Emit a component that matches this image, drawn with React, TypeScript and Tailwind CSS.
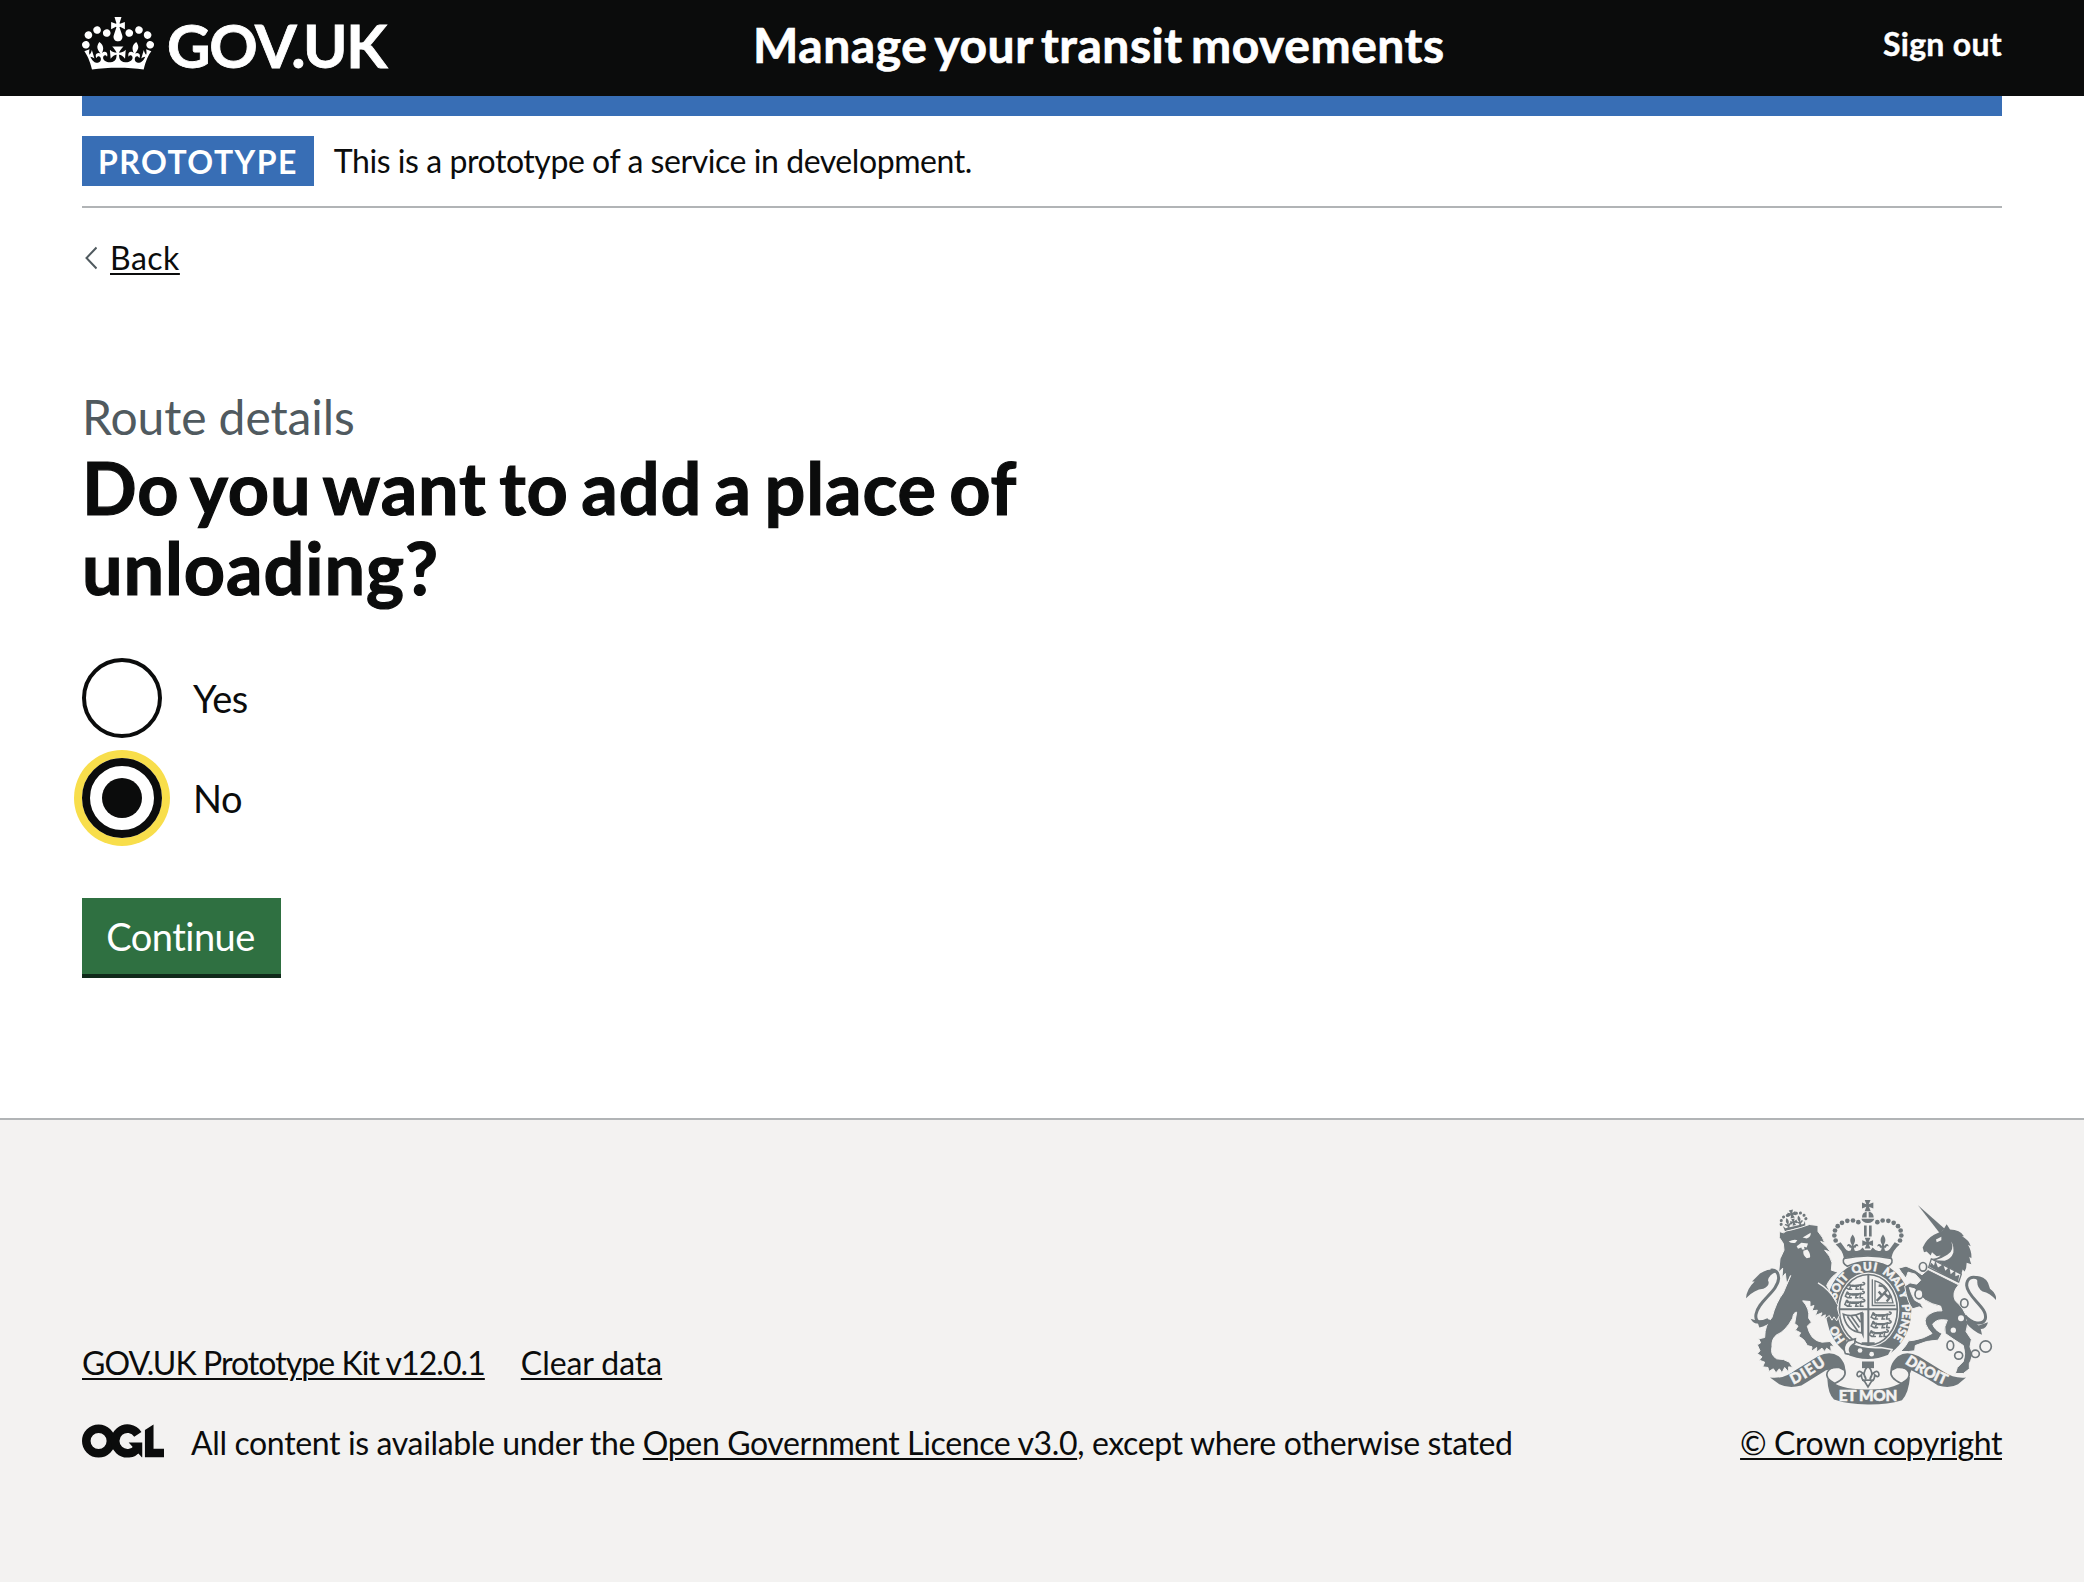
import React from "react";

function Crown({ className }: { className?: string }) {
  return (
    <svg className={className} viewBox="0 0 132 97" fill="currentColor" aria-hidden="true">
      <path
        fillRule="evenodd"
        d="M25 30.2c3.5 1.5 7.7-.2 9.1-3.7 1.5-3.6-.2-7.8-3.9-9.2-3.6-1.4-7.6.3-9.1 3.9-1.4 3.5.3 7.5 3.9 9zM9 39.5c3.6 1.5 7.8-.2 9.2-3.7 1.5-3.6-.2-7.8-3.9-9.1-3.6-1.5-7.6.2-9.1 3.8-1.4 3.5.3 7.5 3.8 9zM4.4 57.2c3.5 1.5 7.7-.2 9.1-3.8 1.5-3.6-.2-7.7-3.9-9.1-3.5-1.5-7.6.3-9.1 3.8-1.4 3.5.3 7.6 3.9 9.1zm38.3-21.4c3.5 1.5 7.7-.2 9.1-3.8 1.5-3.6-.2-7.7-3.9-9.1-3.6-1.5-7.6.3-9.1 3.8-1.3 3.6.4 7.7 3.9 9.1zm64.4-5.6c-3.6 1.5-7.8-.2-9.1-3.7-1.5-3.6.2-7.8 3.8-9.2 3.6-1.4 7.7.3 9.2 3.9 1.3 3.5-.4 7.5-3.9 9zm15.9 9.3c-3.6 1.5-7.7-.2-9.1-3.7-1.5-3.6.2-7.8 3.7-9.1 3.6-1.5 7.7.2 9.2 3.8 1.5 3.5-.3 7.5-3.8 9zm4.7 17.7c-3.6 1.5-7.8-.2-9.2-3.8-1.5-3.6.2-7.7 3.9-9.1 3.6-1.5 7.7.3 9.2 3.8 1.3 3.5-.4 7.6-3.9 9.1zM89.3 35.8c-3.6 1.5-7.8-.2-9.2-3.8-1.4-3.6.2-7.7 3.9-9.1 3.6-1.5 7.7.3 9.2 3.8 1.4 3.6-.3 7.7-3.9 9.1zM69.7 17.7l8.9 4.7V9.3l-8.9 2.8c-.2-.3-.5-.6-.9-.9L72.4 0H59.6l3.5 11.2c-.3.3-.6.5-.9.9l-8.8-2.8v13.1l8.8-4.7c.3.3.6.7.9.9l-5 15.4v.1c-.2.8-.4 1.6-.4 2.4 0 4.1 3.1 7.5 7 8.1h.2c.3 0 .7.1 1 .1.4 0 .7 0 1-.1h.2c4-.6 7.1-4.1 7.1-8.1 0-.8-.1-1.7-.4-2.4V34l-5.1-15.4c.4-.2.7-.6 1-.9zM66 92.8c16.9 0 32.8 1.1 47.1 3.2 4-16.9 8.9-26.7 14-33.5l-9.6-3.4c1 4.9 1.1 7.2 0 10.2-1.5-1.4-3-4.3-4.2-8.7L108.6 76c2.8-2 5-3.2 7.5-3.3-4.4 9.4-10 11.9-13.6 11.2-4.3-.8-6.3-4.6-5.6-7.9 1-4.7 5.7-5.9 8-.5 4.3-8.7-3-11.4-7.6-8.8 7.1-7.2 7.9-13.5 2.1-21.1-8 6.1-8.1 12.3-4.5 20.8-4.7-5.4-12.1-2.5-9.5 6.2 3.4-5.2 7.9-2 7.2 3.1-.6 4.3-6.4 7.8-13.5 7.2-10.3-.9-10.9-8-11.2-13.8 2.5-.5 7.1 1.8 11 7.3L80.2 60c-4.1 4.4-8 5.3-12.3 5.4 1.4-4.4 8-11.6 8-11.6H55.5s6.4 7.2 7.9 11.6c-4.2-.1-8-1-12.3-5.4l1.4 16.4c3.9-5.5 8.5-7.7 10.9-7.3-.3 5.8-.9 12.8-11.1 13.8-7.2.6-12.9-2.9-13.5-7.2-.7-5 3.8-8.3 7.1-3.1 2.7-8.7-4.6-11.6-9.4-6.2 3.7-8.5 3.6-14.7-4.6-20.8-5.8 7.6-5 13.9 2.2 21.1-4.7-2.6-11.9.1-7.7 8.8 2.3-5.5 7.1-4.2 8.1.5.7 3.3-1.3 7.1-5.7 7.9-3.5.7-9-1.8-13.5-11.2 2.5.1 4.7 1.3 7.5 3.3l-4.7-15.4c-1.2 4.4-2.7 7.2-4.3 8.7-1.1-3-.9-5.3 0-10.2l-9.5 3.4c5 6.9 9.9 16.7 14 33.5 14.8-2.1 30.8-3.2 47.7-3.2z"
      />
    </svg>
  );
}

/* Open Government Licence mark: two overlapping rings and a notched bar. */
function OglMark({ className }: { className?: string }) {
  return (
    <svg className={className} viewBox="0 0 483.2 195.7" aria-hidden="true">
      <g fill="none" stroke="currentColor" strokeWidth="50.6">
        <circle cx="97.8" cy="97.8" r="72.5" />
        <path d="M329 58.5A72.5 72.5 0 1 0 327 140" />
      </g>
      <path fill="currentColor" d="M275 106h80v87.8h-3L299 133zM370.8 32.4 421.5 0v142.8h61.7v50.7H370.8z" />
    </svg>
  );
}

const BG = "#f3f2f1";
const INK = "#6f777b";

const ARCH_DOTS: [number, number][] = [
  [385, 96], [369, 91], [352, 92], [336, 98], [323, 108], [315, 121], [313, 136], [317, 151],
];

function Fleur({ x, y, s = 1 }: { x: number; y: number; s?: number }) {
  return (
    <g transform={`translate(${x} ${y}) scale(${s})`}>
      <path d="M0-26C-9-14-9-6-3 4L-3 9C-8 0-17 0-17 10-13 7-10 8-9 14L-4 14-6 24H6L4 14 9 14C10 8 13 7 17 10 17 0 8 0 3 9L3 4C9-6 9-14 0-26z" />
    </g>
  );
}

function CrossPattee({ x, y, s = 1 }: { x: number; y: number; s?: number }) {
  return (
    <path
      transform={`translate(${x} ${y}) scale(${s})`}
      d="M-9-17H9L3-4 17-9V9L4 4 9 17H-9L-4 4-17 9V-9L-4-4z"
    />
  );
}

/* A walking lion, reduced to body, mane, legs and tail. */
function Passant({ x, y, s = 1 }: { x: number; y: number; s?: number }) {
  return (
    <g transform={`translate(${x} ${y}) scale(${s})`} fill="none" stroke={INK} strokeWidth="4.5" strokeLinecap="round">
      <path d="M-22-7C-10-3 8-3 20-7M-24-7L-28 2-20 7M-12-5L-17 7H-10M6-4L3 7H10M18-6L16 7H24M20-6C30-4 32-12 24-13" />
      <path strokeWidth="7" d="M-22-9L-19-5M-8-3H10" />
    </g>
  );
}

function RoyalArms({ className }: { className?: string }) {
  return (
    <svg className={className} viewBox="48 30 750 614" fill={INK} aria-hidden="true">
      <defs>
        <path id="garter" d="M416 483A101 121 0 0 1 416 241A101 121 0 0 1 416 483" />
        <path id="ribbon-left" d="M190 583Q232 564 292 521" />
        <path id="ribbon-right" d="M524 519Q580 558 648 586" />
        <clipPath id="oval"><ellipse cx="415" cy="359" rx="87" ry="106" /></clipPath>
      </defs>

      {/* Royal crown */}
      <CrossPattee x={413} y={46} s={1} />
      <path d="M396 82A17 17 0 0 1 410 65V82zM416 65A17 17 0 0 1 431 82H416zM394 86H433A20 16 0 0 1 394 86z" />
      {ARCH_DOTS.map(([x, y]) => (
        <React.Fragment key={`${x}-${y}`}>
          <circle cx={x} cy={y} r="7" />
          <circle cx={827 - x} cy={y} r="7" />
        </React.Fragment>
      ))}
      <path d="M402 106H410V139H402zM417 106H425V139H417z" />
      <CrossPattee x={413} y={159} s={0.95} />
      <Fleur x={368} y={159} s={1} />
      <Fleur x={459} y={159} s={1} />
      <path d="M317 163L332 156 346 176Q352 186 364 180L372 180Q386 188 398 172L404 180H422L428 172Q441 188 454 180L462 180Q474 186 480 176L494 156 509 163Q488 180 484 204Q413 190 342 204Q338 180 317 163z" />
      <path fill={BG} stroke={INK} strokeWidth="5" d="M352 228Q334 218 342 205Q413 189 484 205Q492 218 474 228Q413 200 352 228z" />

      {/* Garter */}
      <ellipse cx="416" cy="361" rx="128" ry="148" />
      <ellipse cx="415" cy="359" rx="93" ry="112" fill={BG} />
      <g fill={BG} stroke={BG} strokeWidth="1.5" fontFamily="Lato, sans-serif" fontWeight="900" fontSize="35">
        <text><textPath href="#garter" startOffset="80" textLength="52">HO</textPath></text>
        <text><textPath href="#garter" startOffset="208" textLength="78">SOIT</textPath></text>
        <text><textPath href="#garter" startOffset="302" textLength="70">QUI</textPath></text>
        <text><textPath href="#garter" startOffset="390" textLength="100">MAL Y</textPath></text>
        <text><textPath href="#garter" startOffset="504" textLength="108">PENSE</textPath></text>
      </g>

      {/* Quartered shield */}
      <g fill="none" stroke={INK}>
        <ellipse cx="415" cy="359" rx="87" ry="106" strokeWidth="5" />
        <path strokeWidth="6" d="M415 253V465M328 357H503" />
      </g>
      <g clipPath="url(#oval)">
        <Passant x={375} y={290} s={1} />
        <Passant x={374} y={316} s={1} />
        <Passant x={374} y={341} s={1.05} />
        <Passant x={453} y={379} s={1.05} />
        <Passant x={453} y={405} s={1.05} />
        <Passant x={446} y={432} s={1} />
        <path fill="none" stroke={INK} strokeWidth="4" d="M427 267V346H496M435 272Q478 285 489 338H435z" />
        <path fill="none" stroke={INK} strokeWidth="7" d="M440 332L456 316 446 304M456 316L470 300 460 288 446 286M462 308L478 324 470 334M476 314L484 322" />
        <path fill="none" stroke={INK} strokeWidth="5" d="M340 372Q366 382 396 368V428Q348 424 340 372zM352 378L384 424M364 378L388 412M378 376L392 396" />
        <path d="M390 368H401V446L394 428z" />
        <path d="M395 456H434V470H395z" />
      </g>

      {/* Garter buckle and strap */}
      <path stroke={BG} strokeWidth="5" d="M352 452Q400 476 452 472L486 478 476 496Q410 524 344 492z" />
      <path fill={BG} stroke={INK} strokeWidth="5" d="M376 446L354 452Q336 468 346 490L366 494Q348 474 374 460z" />
      <circle cx="390" cy="481" r="7" fill={BG} />
      <circle cx="425" cy="492" r="7" fill={BG} />

      {/* Lion supporter */}
      <g>
        <g transform="translate(190 92) rotate(-13)">
          {[-38, -35, -26, -14, 14, 26, 35, 38].map((x, i) => (
            <circle key={x} cx={x} cy={[2, -9, -18, -20, -20, -18, -9, 2][i]} r="4.6" />
          ))}
          <CrossPattee x={0} y={-21} s={0.72} />
          <Fleur x={-18} y={3} s={0.6} />
          <Fleur x={18} y={3} s={0.6} />
          <CrossPattee x={0} y={4} s={0.6} />
          <path d="M-34 8L-28 16H28L34 8 31 28Q0 20-31 28z" />
        </g>
        <path
          stroke={BG}
          strokeWidth="3"
          d="M148 142L148 124 160 128Q170 120 182 120Q215 112 238 103L264 106 264 124Q280 142 284 158L272 154Q292 170 302 186L284 180Q302 198 306 218L304 240 324 246Q300 262 290 286Q308 320 324 346L322 354 328 376 320 392 312 380 306 390 298 376 284 386 286 374 270 382 276 368 256 376 262 360 246 362 252 346 240 350 240 334 218 332Q240 356 236 384L244 396 232 408Q236 426 246 440Q258 454 276 456L300 454 312 468 302 468 304 484 290 474 284 484 276 474 260 486 260 472 244 484 246 470 232 466Q224 446 206 438L212 428 196 420 204 408 194 400 200 366Q190 366 188 384Q166 424 140 434Q124 446 126 470Q120 494 140 506L160 508 178 516 188 532 176 530 176 546 164 532 156 548 148 536 138 548 130 536 116 544 114 532 98 530 104 516 88 510 96 500 82 490 90 482 82 464 92 458 86 446 104 442Q104 404 126 382Q138 336 160 308L182 256 170 282 166 250 156 262 158 234 146 246 150 206 162 180 160 160z"
        />
        <path fill={BG} d="M176 154Q192 146 202 150L196 158Q184 160 176 154zM218 142L242 128Q244 140 230 145zM200 168L214 158 234 160 230 172 222 170 224 178 216 178 214 172 204 176zM220 182L232 178Q242 190 240 202L230 204Q218 196 220 182z" />
        <path fill="none" stroke={BG} strokeWidth="4" d="M264 278Q296 296 320 334" />
        <path fill="none" stroke={INK} strokeWidth="9" d="M122 392C96 410 74 396 78 372C84 332 144 304 146 264C146 246 136 238 122 240" />
        <path d="M138 240Q116 234 90 250L66 274 74 274Q50 296 48 324Q74 298 100 296Q122 286 114 270Q118 252 138 246zM112 384Q88 396 62 386Q70 402 84 400L88 412Q112 406 122 394z" />
      </g>

      {/* Unicorn supporter */}
      <g>
        <path d="M564 45L644 116 630 130z" />
        <path d="M578 172Q590 146 612 134L638 122 650 102 660 118Q690 118 702 138L696 138Q718 150 722 168L714 164Q726 186 724 204L718 200Q720 214 724 222L710 218Q710 234 704 244L698 238 694 252 606 206Q622 206 632 196L620 198 606 186 602 196 590 184 582 186z" />
        <path fill={BG} d="M618 148L634 140 634 150 620 156zM664 154Q674 182 652 194Q634 206 616 210L644 212Q664 206 670 188Q672 168 664 154z" />
        <path fill={BG} stroke={INK} strokeWidth="4" d="M604 206L694 252 686 276 596 232z" />
        <path d="M598 230L604 218 612 226 616 212 624 232 634 226 638 218 646 242 658 230 662 252 676 240 676 258 688 254 684 276z" />
        <path
          stroke={BG}
          strokeWidth="3"
          d="M594 238L686 284Q664 308 676 332Q704 356 710 384Q716 404 708 424L724 448 720 470 728 492 722 512 718 520 718 536 700 550 676 550 682 532 700 514Q708 492 700 466Q668 446 646 430Q640 410 652 390Q620 384 608 402Q614 420 636 430L624 450Q590 450 556 466L554 482 536 484 512 484 526 468 536 452 552 450Q580 446 606 430Q578 400 588 382Q606 360 636 362L632 348Q604 342 586 330Q574 318 564 310L554 296 538 292Q544 314 554 330L572 340 582 358 568 350 548 356Q532 338 524 288L540 278 560 282 572 270 556 252 534 246 528 264 514 246 506 234 528 228 556 240 576 254z"
        />
        <path fill="none" stroke={INK} strokeWidth="9" d="M704 376C726 402 758 406 766 386C774 352 712 322 710 286C710 266 724 256 744 264" />
        <path d="M734 258Q762 256 774 278L780 296Q798 308 800 332Q780 308 758 304Q740 292 742 272zM716 384L746 406 774 396Q768 418 752 416L756 434Q730 424 706 396z" />
        <g fill={BG}>
          <circle cx="693" cy="384" r="9" /><circle cx="670" cy="420" r="8" />
        </g>
        <g fill={BG} stroke={INK} strokeWidth="5">
          <ellipse cx="579" cy="230" rx="11" ry="13" />
          <ellipse cx="567" cy="312" rx="12" ry="14" />
          <ellipse cx="703" cy="339" rx="11" ry="13" />
        </g>
        <g fill="none" stroke={INK} strokeWidth="5">
          <ellipse cx="661" cy="466" rx="10" ry="14" />
          <ellipse cx="686" cy="496" rx="12" ry="11" />
          <ellipse cx="736" cy="491" rx="12" ry="11" />
          <circle cx="767" cy="469" r="17" />
        </g>
      </g>

      {/* Motto ribbon */}
      <path d="M120 562Q160 568 196 540L264 498Q300 480 326 498C346 516 350 540 342 552Q334 566 318 576L308 562C292 548 308 534 312 536L288 540Q246 566 214 586Q176 596 148 582z" />
      <path d="M708 562Q672 566 640 544L566 498Q530 480 504 498C484 516 478 536 484 544L508 532Q534 548 514 576L534 566 544 540Q596 566 624 586Q660 596 684 582z" />
      <path fill={BG} stroke={INK} strokeWidth="5" d="M328 532C292 528 272 558 314 580Q352 562 344 540zM500 532C536 528 556 558 514 580Q476 562 484 540z" />
      <path d="M292 566Q330 600 414 598Q498 600 540 560Q536 610 516 630Q470 644 413 643Q350 642 312 628Q294 612 292 566z" />
      <g fill={BG} stroke={BG} strokeWidth="1.5" fontFamily="Lato, sans-serif" fontWeight="900" fontSize="46">
        <text x="326" y="632" textLength="176">ET MON</text>
        <text fontSize="44"><textPath href="#ribbon-left" textLength="116">DIEU</textPath></text>
        <text fontSize="44"><textPath href="#ribbon-right" textLength="138">DROIT</textPath></text>
      </g>

      {/* Fleur-de-lis badge */}
      <path d="M396 514H432V534H396z" />
      <path fill={BG} stroke={INK} strokeWidth="5" d="M414 528C398 544 400 556 408 568C404 546 382 534 381 554C384 564 390 558 394 554C394 568 400 572 404 574L414 590 424 574C430 572 434 568 434 554C440 560 446 562 447 554C446 534 424 546 420 568C428 556 430 544 414 528z" />
      <path fill="none" stroke={INK} strokeWidth="5" d="M396 570H432" />
    </svg>
  );
}

const link = "underline decoration-2 underline-offset-[3px]";

function Radio({ label, checked }: { label: string; checked?: boolean }) {
  return (
    <label className="flex h-20 items-center gap-[31px]">
      <input type="radio" name="unloading" defaultChecked={checked} className="sr-only" />
      {checked ? (
        <span className="flex size-20 items-center justify-center rounded-full border-8 border-[#0b0c0c] ring-8 ring-[#f8de4b]">
          <span className="size-10 rounded-full bg-[#0b0c0c]" />
        </span>
      ) : (
        <span className="size-20 rounded-full border-4 border-[#0b0c0c]" />
      )}
      <span className="pb-px text-[38px] leading-[50px] tracking-[-0.4px]">{label}</span>
    </label>
  );
}

export default function App() {
  return (
    <div className="flex min-h-screen flex-col bg-white font-['Lato',sans-serif] text-[32px] leading-10 text-[#0b0c0c]">
      <header className="bg-[#0b0c0c] px-[82px] text-white">
        <div className="flex h-24 items-center pb-[7px] font-bold">
          <a className="flex w-[671px] items-center" href="#">
            <Crown className="mb-0.5 h-[53px] w-[72px]" />
            <span className="ml-[13px] text-[60px] leading-none tracking-[-1.3px] [-webkit-text-stroke:0.8px]">GOV.UK</span>
          </a>
          <span className="text-[48px] leading-[60px] tracking-[0.55px] [-webkit-text-stroke:0.7px] [word-spacing:-4px]">Manage your transit movements</span>
          <a className="ml-auto pb-px tracking-[0.3px] [-webkit-text-stroke:0.4px]" href="#">Sign out</a>
        </div>
      </header>

      <main className="flex flex-col px-[82px]">
        <div className="h-5 bg-[#386eb5]" />
        <div className="flex items-center gap-5 border-b-2 border-[#b1b4b6] py-5">
          <strong className="flex h-[50px] items-center bg-[#386eb5] px-4 pt-px font-bold tracking-[1.45px] text-white">PROTOTYPE</strong>
          <span className="tracking-[-0.44px]">This is a prototype of a service in development.</span>
        </div>

        <a className="mt-[30px] flex items-center self-start" href="#">
          <svg className="ml-[3px] h-6 w-3" viewBox="0 0 12 24" fill="none" stroke="#505a5f" strokeWidth="2" aria-hidden="true">
            <path d="M11.5 1.5 1.5 12l10 10.5" />
          </svg>
          <span className={`ml-[13px] tracking-[0.5px] ${link}`}>Back</span>
        </a>

        <h1 className="mt-[109px] w-[960px] text-[72px] font-bold leading-20 tracking-[0.9px] [-webkit-text-stroke:1.2px] [word-spacing:-6px]">
          <span className="block text-[48px] font-normal leading-[60px] tracking-[-0.1px] text-[#505a5f] [-webkit-text-stroke:0] [word-spacing:0]">Route details</span>
          Do you want to add a place of unloading?
        </h1>

        <div className="mt-[51px] flex flex-col gap-5">
          <Radio label="Yes" />
          <Radio label="No" checked />
        </div>

        <button className="mt-[60px] h-20 w-[199px] self-start border-b-4 border-[#10291a] bg-[#2f7041] pr-0.5 pb-px text-[38px] leading-[50px] tracking-[-0.5px] text-white">
          Continue
        </button>
      </main>

      <footer className="mt-[140px] flex grow items-start justify-between border-t-2 border-[#b1b4b6] bg-[#f3f2f1] px-[82px] pt-20">
        <div className="pt-[143px]">
          <div className="flex gap-9">
            <a className={`tracking-[-0.94px] ${link}`} href="#">GOV.UK Prototype Kit v12.0.1</a>
            <a className={`tracking-[-0.06px] ${link}`} href="#">Clear data</a>
          </div>
          <div className="mt-10 flex items-center">
            <OglMark className="mb-1 h-[34px] w-[82px]" />
            <p className="ml-[27px] tracking-[-0.36px]">
              All content is available under the{" "}
              <a className={link} href="#">Open Government Licence v3.0</a>, except where otherwise stated
            </p>
          </div>
        </div>
        <div className="flex flex-col items-end">
          <RoyalArms className="mr-[6px] h-[205px] w-[250px]" />
          <a className={`mt-[18px] tracking-[-0.38px] ${link}`} href="#">© Crown copyright</a>
        </div>
      </footer>
    </div>
  );
}
